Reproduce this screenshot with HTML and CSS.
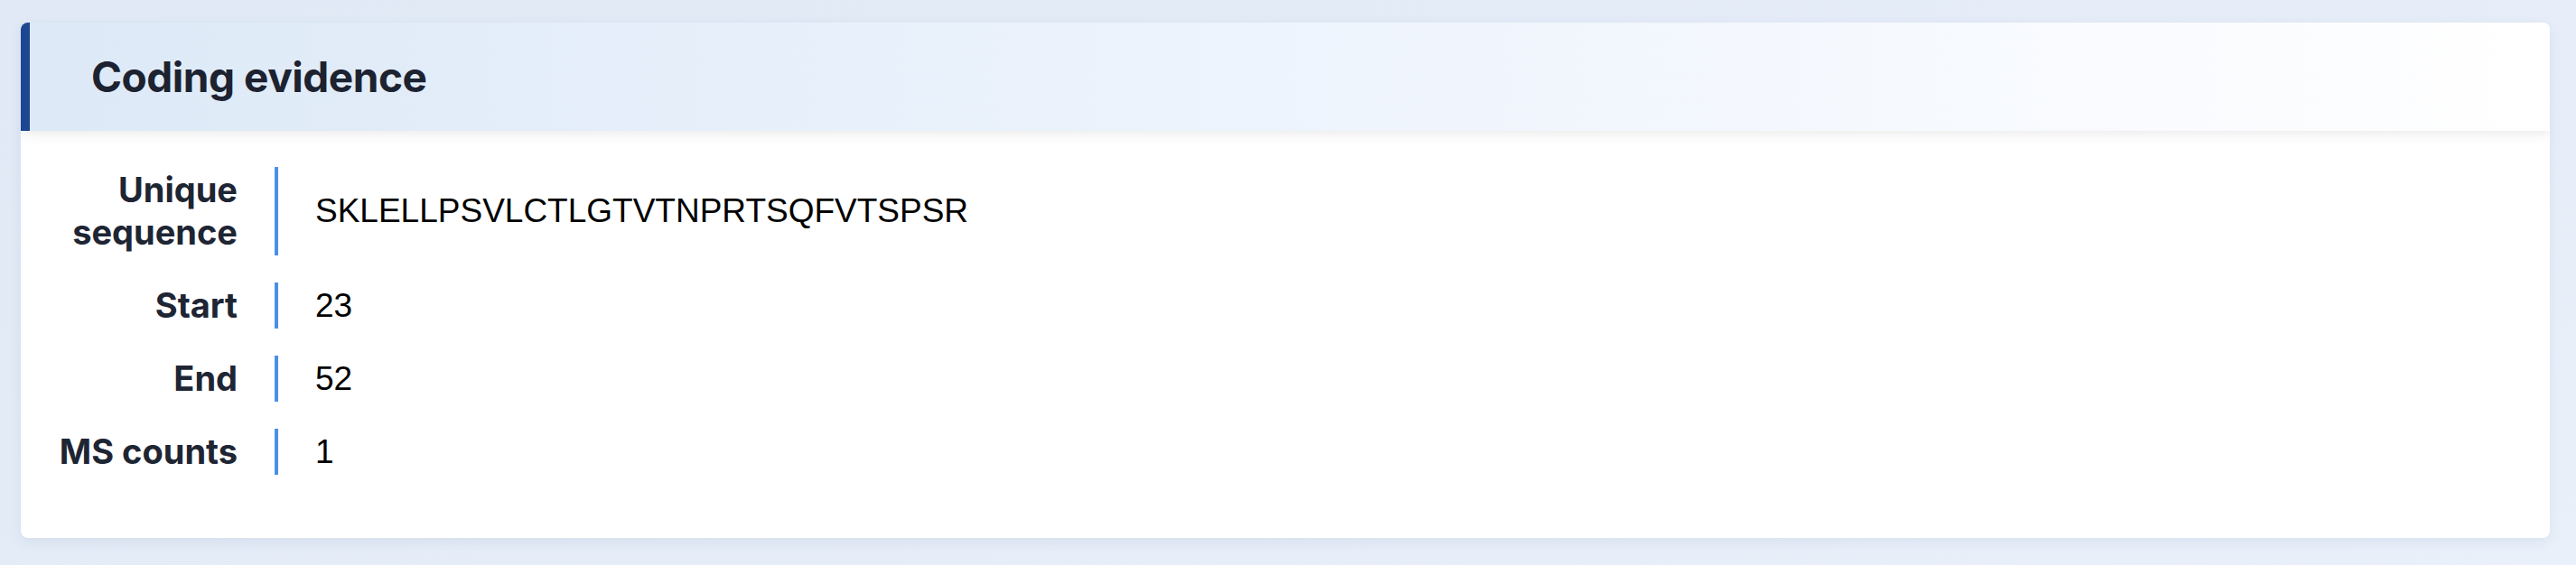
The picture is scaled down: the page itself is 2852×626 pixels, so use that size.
FILE: index.html
```html
<!DOCTYPE html>
<html lang="en">
<head>
    <meta charset="UTF-8">
    <meta name="viewport" content="width=device-width, initial-scale=1.0">
    <title>Coding evidence</title>
    <link rel="stylesheet" href="styles.css">
</head>
<body>
    <div class="card">
        <div class="card-header">
            <h2>Coding evidence</h2>
        </div>
        <div class="card-body">
            <div class="field">
                <div class="label">Unique sequence</div>
                <div class="value">SKLELLPSVLCTLGTVTNPRTSQFVTSPSR</div>
            </div>
            <div class="field">
                <div class="label">Start</div>
                <div class="value">23</div>
            </div>
            <div class="field">
                <div class="label">End</div>
                <div class="value">52</div>
            </div>
            <div class="field">
                <div class="label">MS counts</div>
                <div class="value">1</div>
            </div>
        </div>
    </div>
</body>
</html>
```

FILE: styles.css
```css
body {
    margin: 0;
    min-height: 626px;
    padding: 25px 29px 30px 23px;
    box-sizing: border-box;
    font-family: Inter, "Noto Sans", sans-serif;
    background: linear-gradient(160deg, #e0e9f5 0%, #e6edf8 60%, #eaf0fa 100%);
}
.card {
    background-color: #ffffff;
    border-radius: 8px;
    box-shadow: 0 4px 14px rgba(40, 70, 130, 0.08);
    overflow: hidden;
}
.card-header {
    height: 120px;
    display: flex;
    align-items: center;
    padding: 0 68px;
    border-left: 10px solid #1d4690;
    background: linear-gradient(90deg, #dde9f7 0%, #eef4fd 50%, #f6f9fe 75%, #ffffff 100%);
    box-shadow: 0 4px 12px rgba(0, 0, 0, 0.08);
    position: relative;
}
.card-header h2 {
    margin: 0;
    font-size: 46px;
    font-weight: 700;
    letter-spacing: -0.01em;
    color: #1c2230;
}
.card-body {
    display: grid;
    grid-template-columns: 245px 1fr;
    row-gap: 30px;
    padding: 40px 40px 70px 36px;
}
.field {
    display: contents;
}
.label {
    text-align: right;
    font-size: 38px;
    font-weight: 700;
    line-height: 47px;
    padding: 2px 41px 2px 0;
    color: #1e2533;
}
.value {
    display: flex;
    align-items: center;
    border-left: 4px solid #4b8fe8;
    padding-left: 41px;
    font-family: "Liberation Sans", Arial, sans-serif;
    font-size: 37px;
    color: #000000;
}
```
